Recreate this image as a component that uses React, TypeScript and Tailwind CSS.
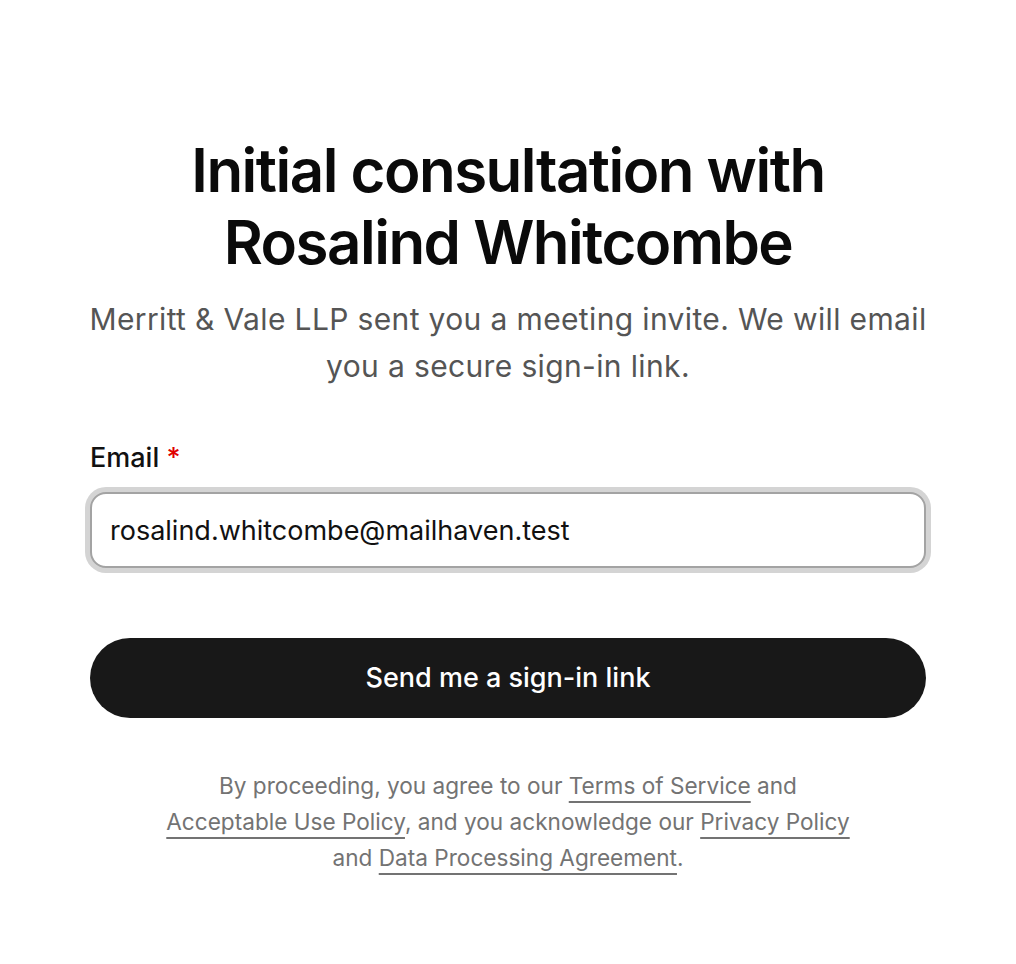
import React, { useState } from 'react';

const linkClass = 'underline underline-offset-[7px] decoration-[1.5px] decoration-[#737373]';

export default function App() {
    const [email, setEmail] = useState('rosalind.whitcombe@mailhaven.test');

    return (
        <div className="min-h-screen bg-white font-['Inter',sans-serif]">
            <div className="mx-auto w-[836px] pt-[134px] pb-16">
                {/* Heading */}
                <h1 className="text-center text-[60px] leading-[72px] font-semibold tracking-[-0.025em] text-[#0a0a0a]">
                    Initial consultation with
                    <br />
                    Rosalind Whitcombe
                </h1>
                <p className="-mx-6 mt-[18px] text-center text-[30px] leading-[47px] tracking-[0.012em] text-[#555555] whitespace-nowrap">
                    Merritt &amp; Vale LLP sent you a meeting invite. We will email
                    <br />
                    you a secure sign-in link.
                </p>

                {/* Form */}
                <form className="mt-[50px]" onSubmit={(e) => e.preventDefault()}>
                    <label htmlFor="email" className="block text-[27px] leading-[36px] font-medium text-[#111111]">
                        Email <span className="text-[#e00000]">*</span>
                    </label>
                    <input
                        id="email"
                        type="email"
                        value={email}
                        onChange={(e) => setEmail(e.target.value)}
                        className="mt-4 block w-full h-[76px] px-[18px] rounded-[16px] border-2 border-[#a3a3a3] ring-[5px] ring-[#d4d4d4] outline-none text-[27px] text-[#111111] bg-white"
                    />
                    <button
                        type="submit"
                        className="mt-[70px] w-full h-20 rounded-full bg-[#181818] text-white text-[27px] font-medium"
                    >
                        Send me a sign-in link
                    </button>
                </form>

                {/* Legal */}
                <p className="-mx-6 mt-[50px] text-center text-[22.6px] leading-[36px] text-[#737373] whitespace-nowrap">
                    By proceeding, you agree to our <a href="#" className={linkClass}>Terms of Service</a> and
                    <br />
                    <a href="#" className={linkClass}>Acceptable Use Policy</a>, and you acknowledge our{' '}
                    <a href="#" className={linkClass}>Privacy Policy</a>
                    <br />
                    and <a href="#" className={linkClass}>Data Processing Agreement</a>.
                </p>
            </div>
        </div>
    );
}
